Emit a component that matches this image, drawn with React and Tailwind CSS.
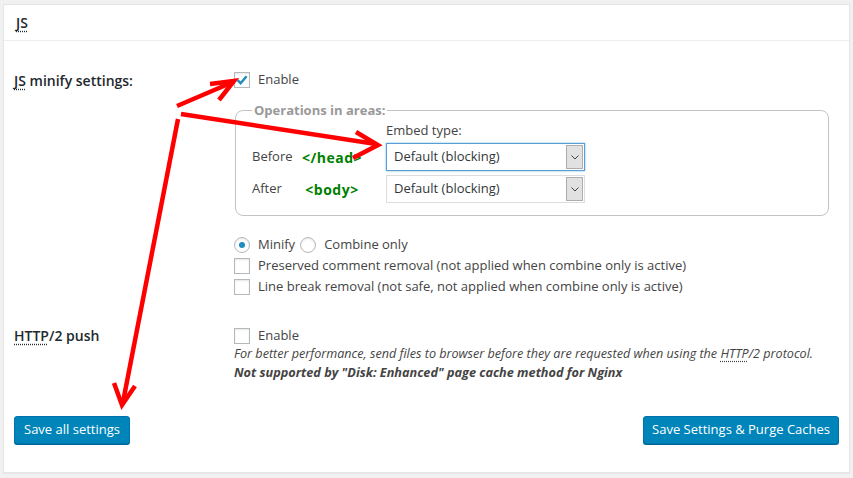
import React from "react";

const FONT = { fontFamily: '"Open Sans", "Noto Sans", sans-serif' };

function Checkbox({ checked }) {
  return (
    <span className="flex h-4 w-4 shrink-0 items-center justify-center border border-[#b4b9be] bg-white shadow-[inset_0_1px_2px_rgba(0,0,0,0.1)]">
      {checked && (
        <svg width="14" height="14" viewBox="0 0 14 14" aria-hidden>
          <path d="M2.5 7.2 L5.6 10.2 L11.6 3.2" fill="none" stroke="#1e8cbe" strokeWidth="2.4" />
        </svg>
      )}
    </span>
  );
}

function Radio({ checked }) {
  return (
    <span className="flex h-4 w-4 shrink-0 items-center justify-center rounded-full border border-[#b4b9be] bg-white shadow-[inset_0_1px_2px_rgba(0,0,0,0.1)]">
      {checked && <span className="h-[6px] w-[6px] rounded-full bg-[#1e8cbe]" />}
    </span>
  );
}

function Select({ focused }) {
  return (
    <div
      className={`ml-[24px] flex h-[28px] w-[199px] items-stretch border bg-white ${
        focused ? "border-[#5b9dd9] shadow-[0_0_2px_rgba(30,140,190,0.6)]" : "border-[#ddd]"
      }`}
    >
      <span className="flex flex-1 items-center pl-[7px] text-[13px] text-[#32373c]">
        Default (blocking)
      </span>
      <span className="m-px flex w-[17px] items-center justify-center border border-[#adadad] bg-[#e1e1e1]">
        <svg width="8" height="5" viewBox="0 0 8 5" aria-hidden>
          <path d="M0.5 0.5 L4 4 L7.5 0.5" fill="none" stroke="#444" strokeWidth="1" />
        </svg>
      </span>
    </div>
  );
}

function Arrows() {
  return (
    <svg
      className="pointer-events-none absolute left-0 top-0"
      width="853"
      height="478"
      viewBox="0 0 853 478"
      aria-hidden
    >
      <g stroke="#ff0000" strokeWidth="4.5" fill="none" strokeLinecap="butt">
        <path d="M177 106 L233 82" />
        <path d="M210 84 L234 81 L219 100" />
        <path d="M181 114 L376 144" />
        <path d="M356 132 L378 145 L353 158" />
        <path d="M178 119 L123 402" />
        <path d="M114 383 L122 405 L135 386" />
      </g>
    </svg>
  );
}

export default function App() {
  return (
    <div className="relative h-[478px] w-[853px] overflow-hidden bg-[#f1f1f1]" style={FONT}>
      <div className="ml-[3px] mt-[4px] flex h-[469px] w-[847px] flex-col border border-[#e5e5e5] bg-white shadow-[0_1px_1px_rgba(0,0,0,0.04)]">
        <div className="flex h-[36px] items-center border-b border-[#eee] pl-[12px]">
          <span className="text-[14px] font-semibold text-[#23282d] underline decoration-dotted underline-offset-[3px]">
            JS
          </span>
        </div>

        <div className="grid grid-cols-[220px_1fr] px-[10px] pt-[30px] text-[13px] text-[#444]">
          <div className="text-[14px] font-semibold leading-[20px] text-[#23282d]">
            <span className="underline decoration-dotted underline-offset-[3px]">JS</span> minify settings:
          </div>
          <div>
            <label className="flex h-[18px] items-center gap-[8px]">
              <Checkbox checked />
              <span>Enable</span>
            </label>

            <fieldset className="ml-px mt-[13px] w-[594px] rounded-[8px] border border-[#c3c3c3] px-[16px] pb-[12px] pt-[3px]">
              <legend className="px-[2px] text-[13px] font-bold leading-4 text-[#999]">
                Operations in areas:
              </legend>
              <div className="grid grid-cols-[50px_60px_223px] items-center gap-y-[4px]">
                <span />
                <span />
                <span className="ml-[24px] h-[18px] leading-[18px]">Embed type:</span>

                <span>Before</span>
                <span className="whitespace-nowrap text-center text-[14px] font-bold tracking-[0.5px] text-[#008000]">
                  &lt;/head&gt;
                </span>
                <Select focused />

                <span>After</span>
                <span className="whitespace-nowrap text-center text-[14px] font-bold tracking-[0.5px] text-[#008000]">
                  &lt;body&gt;
                </span>
                <Select />
              </div>
            </fieldset>

            <div className="mt-[18px] flex flex-col">
              <div className="flex h-[21px] items-center">
                <label className="flex items-center gap-[8px]">
                  <Radio checked />
                  <span>Minify</span>
                </label>
                <label className="ml-[5px] flex items-center gap-[8px]">
                  <Radio />
                  <span>Combine only</span>
                </label>
              </div>
              <label className="flex h-[21px] items-center gap-[8px]">
                <Checkbox />
                <span>Preserved comment removal (not applied when combine only is active)</span>
              </label>
              <label className="flex h-[21px] items-center gap-[8px]">
                <Checkbox />
                <span>Line break removal (not safe, not applied when combine only is active)</span>
              </label>
            </div>
          </div>

          <div className="mt-[30px] text-[14px] font-semibold leading-[18px] text-[#23282d]">
            <span className="underline decoration-dotted underline-offset-[3px]">HTTP</span>/2 push
          </div>
          <div className="mt-[30px]">
            <label className="flex h-[18px] items-center gap-[8px]">
              <Checkbox />
              <span>Enable</span>
            </label>
            <p className="text-[12.6px] italic leading-[18px]">
              For better performance, send files to browser before they are requested when using the{" "}
              <span className="underline decoration-dotted underline-offset-[3px]">HTTP</span>/2 protocol.
            </p>
            <p className="text-[12.7px] font-bold italic leading-[18px]">
              Not supported by "Disk: Enhanced" page cache method for Nginx
            </p>
          </div>
        </div>

        <div className="mt-[35px] flex justify-between px-[10px]">
          <button
            type="button"
            className="h-[28px] rounded-[3px] border border-[#0073aa] bg-[#0085ba] px-[9px] text-[13px] text-white shadow-[0_1px_0_#006799]"
          >
            Save all settings
          </button>
          <button
            type="button"
            className="h-[28px] rounded-[3px] border border-[#0073aa] bg-[#0085ba] px-[8px] text-[13px] text-white shadow-[0_1px_0_#006799]"
          >
            Save Settings &amp; Purge Caches
          </button>
        </div>
      </div>
      <Arrows />
    </div>
  );
}
